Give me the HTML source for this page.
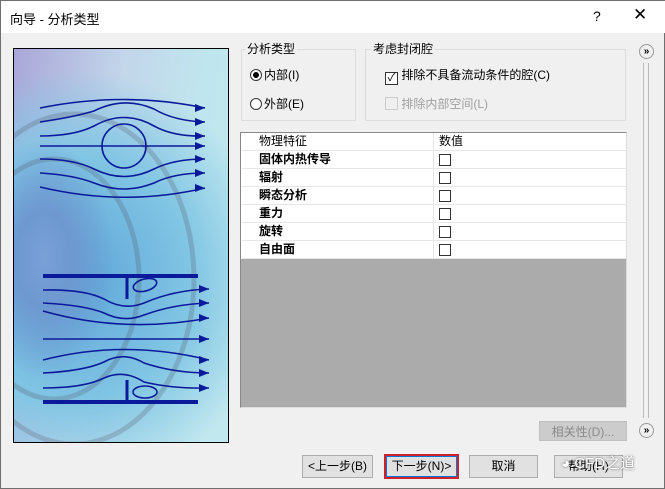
<!DOCTYPE html>
<html><head><meta charset="utf-8"><style>
*{margin:0;padding:0;box-sizing:border-box}
body{width:665px;height:489px;background:#f0f0f0;font-family:"Liberation Sans","Noto Sans CJK SC",sans-serif;font-size:12px;color:#000;position:relative;overflow:hidden;border:1px solid #6f6f6f}
.a{position:absolute}
.title{left:0;top:0;width:665px;height:32px;background:#fff}
.grp{border:1px solid #dcdcdc}
.lg{background:#f0f0f0;padding:0 2px;line-height:14px}
.btn{background:#e1e1e1;border:1px solid #adadad;text-align:center;line-height:20px;font-size:12px}
.row{left:1px;width:385px;height:18px;border-bottom:1px solid #e6e6e6;font-weight:bold;line-height:17px;padding-left:17px}
.cb{width:12px;height:12px;border:1px solid #333;background:#fff;position:absolute;left:197px;top:3px}
.rd{display:inline-block;width:12px;height:12px;border:1px solid #333;border-radius:50%;vertical-align:-2px;margin-right:2px;position:relative;background:#fff}
</style></head><body>
<div class="a title"></div>
<div class="a" style="left:9px;top:8px;font-size:13px">向导 - 分析类型</div>
<div class="a" style="left:592px;top:7px;font-size:14px">?</div>
<div class="a" style="left:632px;top:4px;font-size:17px;font-weight:300">✕</div>

<div class="a" style="left:12px;top:47px;width:216px;height:395px;border:1px solid #000;overflow:hidden;background:
radial-gradient(ellipse 70px 120px at 30px 210px,#7aa0d8 0,#6e98d0 40%,transparent 100%),
radial-gradient(ellipse 200px 210px at 60px 230px,#5ca4d8 0,#82c6e4 60%,transparent 100%),
linear-gradient(100deg,#a9a6d8 0,#c3d6ea 40%,#bfe6ee 70%,#c2e8ef 100%)">
<svg width="216" height="395" style="position:absolute;left:0;top:0" fill="none" stroke="#0a1a9a" stroke-width="1.6">
<g stroke="#556" stroke-opacity=".25" stroke-width="5"><ellipse cx="60" cy="230" rx="120" ry="165"/><ellipse cx="40" cy="230" rx="85" ry="120"/></g>
<path d="M26 59Q110 42 191 59M26 73Q60 68 80 62Q110 47 140 60Q160 72 191 73M26 87Q60 87 80 77Q110 60 140 77Q160 88 191 87M26 97H191M26 110Q60 110 80 120Q110 135 140 120Q160 110 191 110M26 124Q60 126 80 134Q110 146 140 134Q160 124 191 124M26 138Q110 158 191 139"/>
<circle cx="110" cy="97" r="22"/>
<path d="M29 241Q70 240 90 250Q110 262 130 254Q160 241 195 240M29 254Q70 256 90 264Q110 274 130 266Q160 255 195 254M29 262Q110 285 195 269M29 290H195M29 311Q110 290 195 311M29 324Q70 322 90 313Q110 302 130 314Q160 324 195 324M29 339Q70 339 90 329Q110 320 130 333Q160 340 195 339"/>
<g stroke-width="4"><path d="M29 227H184M29 353H184"/></g>
<g stroke-width="3"><path d="M113 227V250M113 331V353"/></g>
<ellipse cx="131" cy="236" rx="12" ry="6" transform="rotate(-15 131 236)"/><ellipse cx="131" cy="343" rx="12" ry="6"/>
<g fill="#0a1a9a" stroke="none"><path d="M181 55l10 4-10 4zM181 69l10 4-10 4zM181 83l10 4-10 4zM181 93l10 4-10 4zM181 106l10 4-10 4zM181 120l10 4-10 4zM181 135l10 4-10 4zM185 236l10 4-10 4zM185 250l10 4-10 4zM185 265l10 4-10 4zM185 286l10 4-10 4zM185 307l10 4-10 4zM185 320l10 4-10 4zM185 335l10 4-10 4z"/></g>
</svg></div>

<div class="a grp" style="left:240px;top:48px;width:115px;height:72px"></div>
<div class="a lg" style="left:244px;top:41px">分析类型</div>
<div class="a" style="left:249px;top:65px"><span class="rd"><span class="a" style="left:2px;top:2px;width:6px;height:6px;border-radius:50%;background:#000"></span></span>内部(I)</div>
<div class="a" style="left:249px;top:94px"><span class="rd"></span>外部(E)</div>
<div class="a grp" style="left:364px;top:48px;width:261px;height:72px"></div>
<div class="a lg" style="left:370px;top:41px">考虑封闭腔</div>
<div class="a" style="left:384px;top:65px"><span style="display:inline-block;width:13px;height:13px;border:1px solid #333;vertical-align:-2px;font-size:11px;line-height:11px;text-align:center;background:#fff">✓</span> 排除不具备流动条件的腔(C)</div>
<div class="a" style="left:384px;top:94px;color:#a0a0a0"><span style="display:inline-block;width:13px;height:13px;border:1px solid #ccc;vertical-align:-2px"></span> 排除内部空间(L)</div>

<div class="a" style="left:239px;top:131px;width:387px;height:276px;background:#ababab;border:1px solid #888;border-right-color:#ddd;border-bottom-color:#ddd;overflow:hidden">
<div class="a" style="left:0;top:0;width:385px;height:126px;background:#fff"></div>
<div class="a" style="left:192px;top:0;width:1px;height:126px;background:#e6e6e6"></div>
<div class="a row" style="top:0;font-weight:normal">物理特征<span class="a" style="left:197px;font-weight:normal">数值</span></div>
<div class="a row" style="top:18px">固体内热传导<span class="cb"></span></div>
<div class="a row" style="top:36px">辐射<span class="cb"></span></div>
<div class="a row" style="top:54px">瞬态分析<span class="cb"></span></div>
<div class="a row" style="top:72px">重力<span class="cb"></span></div>
<div class="a row" style="top:90px">旋转<span class="cb"></span></div>
<div class="a row" style="top:108px">自由面<span class="cb"></span></div>
</div>

<div class="a" style="left:642px;top:62px;width:6px;height:355px;border-left:1px solid #bbb;border-right:1px solid #bbb"></div>
<div class="a" style="left:638px;top:43px;width:15px;height:15px;border:1px solid #999;border-radius:50%;font-size:10px;line-height:13px;text-align:center;font-weight:bold;background:#f0f0f0">»</div>
<div class="a" style="left:638px;top:422px;width:15px;height:15px;border:1px solid #999;border-radius:50%;font-size:10px;line-height:13px;text-align:center;font-weight:bold;background:#f0f0f0">»</div>

<div class="a btn" style="left:538px;top:420px;width:88px;height:20px;background:#ccc;border-color:#bfbfbf;color:#8a8a8a">相关性(D)...</div>
<div class="a btn" style="left:301px;top:454px;width:71px;height:23px">&lt;上一步(B)</div>
<div class="a btn" style="left:383px;top:453px;width:75px;height:25px;border:2px solid #d0202a;box-shadow:inset 0 0 0 1px #0078d7;line-height:21px">下一步(N)&gt;</div>
<div class="a btn" style="left:468px;top:454px;width:69px;height:23px">取消</div>
<div class="a btn" style="left:553px;top:454px;width:69px;height:23px">帮助(H)</div>
<div class="a" style="left:560px;top:451px;font-size:15px;color:#fff;text-shadow:0 0 2px #555">◕ CFD之道</div>
</body></html>
